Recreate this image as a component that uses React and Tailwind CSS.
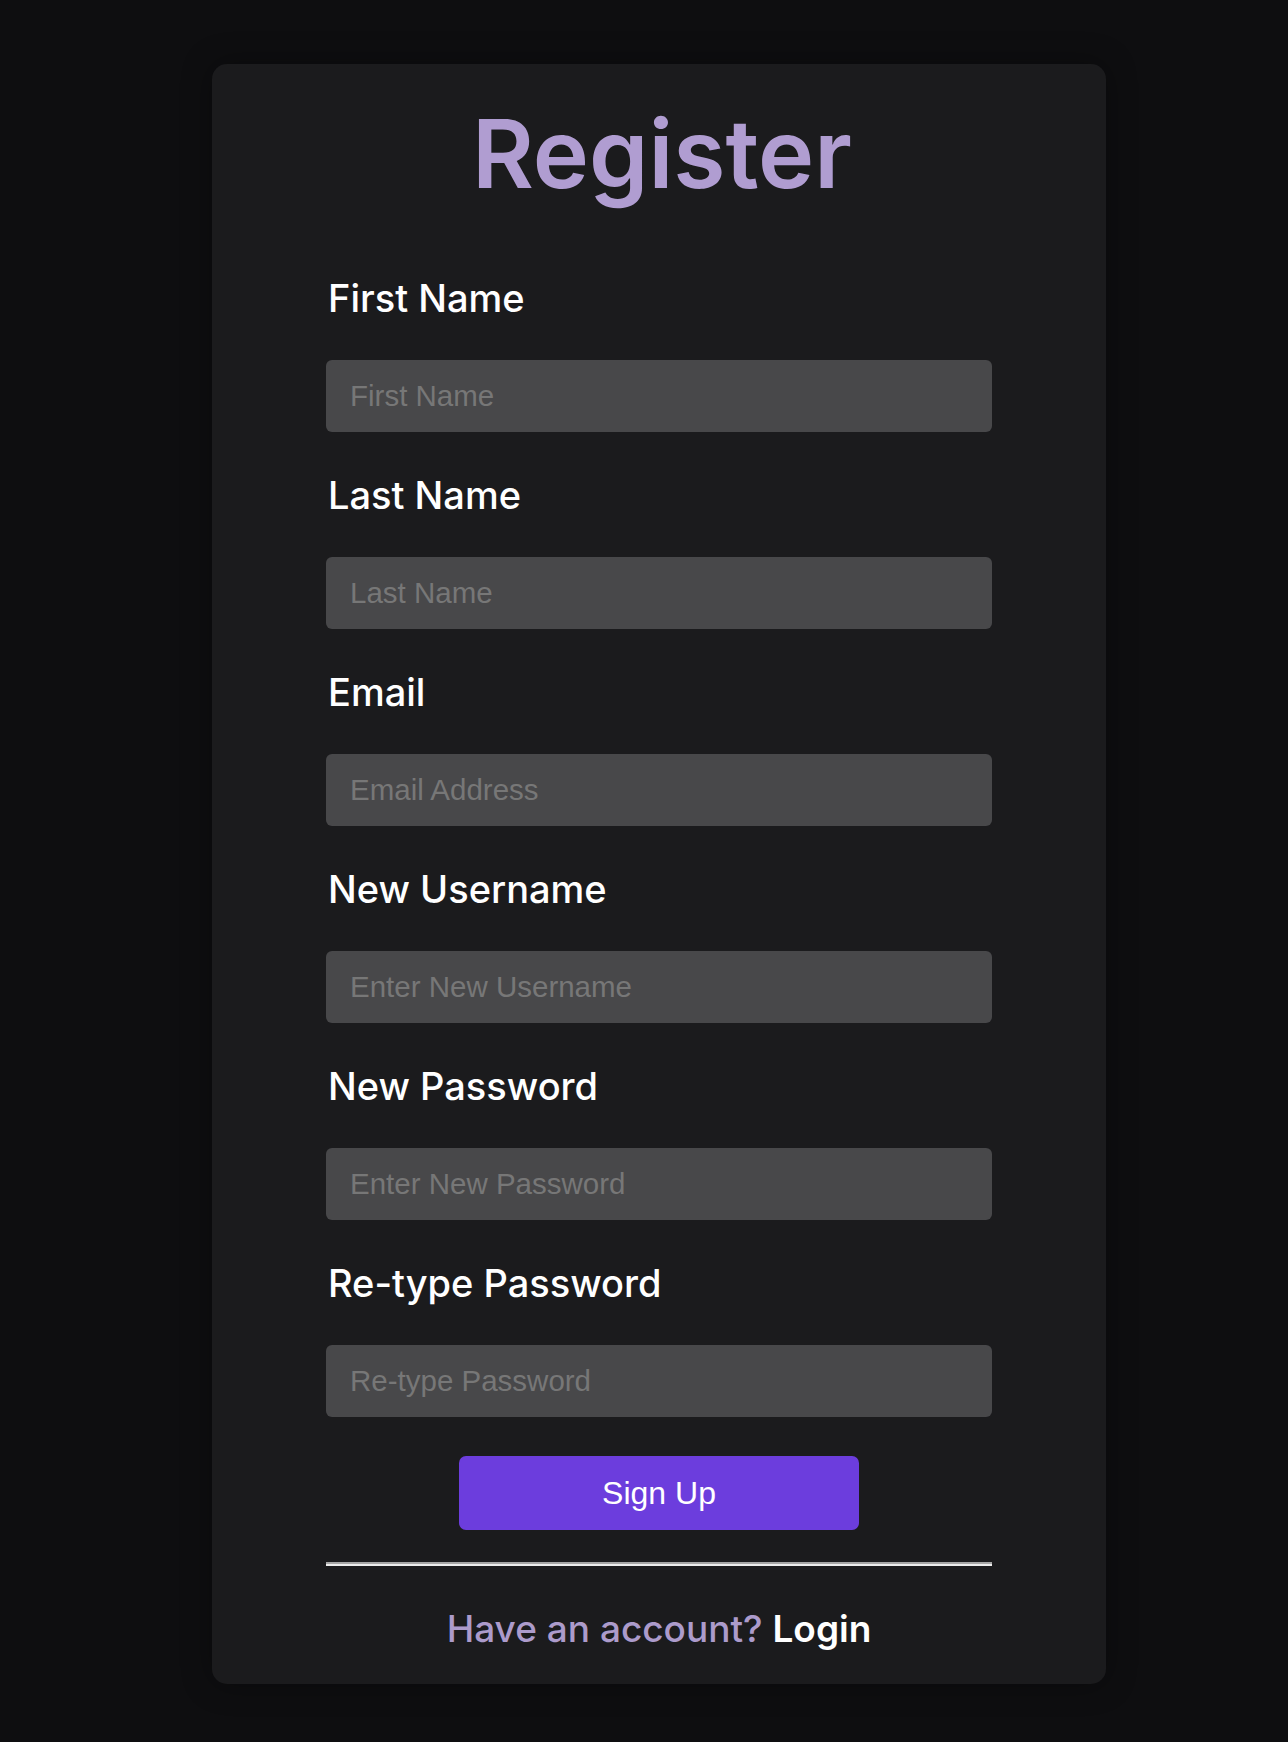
import React from 'react';

const fields = [
  { label: 'First Name', placeholder: 'First Name', type: 'text' },
  { label: 'Last Name', placeholder: 'Last Name', type: 'text' },
  { label: 'Email', placeholder: 'Email Address', type: 'email' },
  { label: 'New Username', placeholder: 'Enter New Username', type: 'text' },
  { label: 'New Password', placeholder: 'Enter New Password', type: 'password' },
  { label: 'Re-type Password', placeholder: 'Re-type Password', type: 'password' },
];

export default function App() {
  return (
    <div className="min-h-[1742px] bg-[#0e0e10] flex justify-center items-start pl-[30px] pt-[64px] font-['Inter',sans-serif]">
      <div className="w-[894px] bg-[#1b1b1d] rounded-[15px] shadow-[0_0_30px_rgba(0,0,0,0.35)] pt-[42px] pb-[37px]">
        {/* Title */}
        <h1 className="text-center text-[95px] leading-none font-[560] text-[#b09dd1] pl-[6px]">
          Register
        </h1>

        {/* Form */}
        <form className="w-[666px] mx-auto mt-[78px]" onSubmit={(e) => e.preventDefault()}>
          {fields.map((f, i) => (
            <div key={f.label} className={i === 0 ? '' : 'mt-[44px]'}>
              <label className="block text-[38px] leading-none font-medium text-white pl-[2px]">
                {f.label}
              </label>
              <input
                type={f.type}
                placeholder={f.placeholder}
                className="mt-[43px] block w-full h-[72px] rounded-[6px] bg-[#48484a] pl-[24px] text-[29.5px] text-white placeholder:text-[#777777] font-['Liberation_Sans',Arial,sans-serif] outline-none"
              />
            </div>
          ))}

          <button
            type="submit"
            className="mt-[39px] mx-auto block w-[400px] h-[74px] rounded-[7px] bg-[#6c3ddd] text-white text-[32px] font-['Liberation_Sans',Arial,sans-serif] cursor-pointer"
          >
            Sign Up
          </button>

          {/* Divider */}
          <div className="mt-[32px]">
            <div className="h-[2px] bg-[#a6a6a6]" />
            <div className="h-[2px] bg-[#ececec]" />
          </div>

          <p className="mt-[44px] text-center text-[37px] leading-none font-medium">
            <span className="text-[#ac9bcb]">Have an account? </span>
            <a href="#" className="text-white font-semibold">Login</a>
          </p>
        </form>
      </div>
    </div>
  );
}
